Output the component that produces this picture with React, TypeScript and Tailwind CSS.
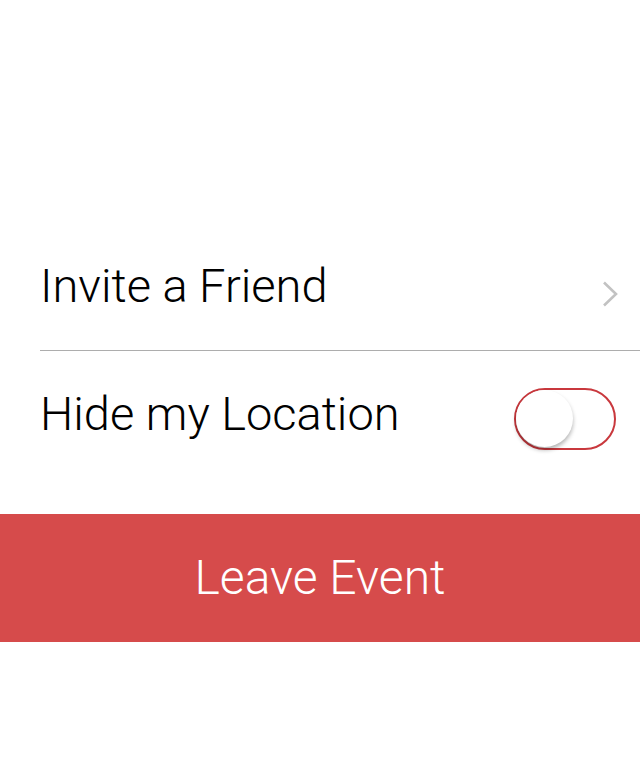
import React from "react";

function Chevron() {
  return (
    <svg width="16" height="26" viewBox="0 0 16 26" fill="none" className="block">
      <path d="M2 1.5 L14 13 L2 24.5" stroke="#c2c2c2" strokeWidth="2.6" strokeLinecap="butt" strokeLinejoin="miter" />
    </svg>
  );
}

function Toggle() {
  return (
    <div className="relative h-[62px] w-[102px] rounded-full border-2 border-[#c9383d] bg-white">
      <div className="absolute left-[0px] top-[0px] h-[57px] w-[57px] rounded-full bg-white shadow-[0_3px_4px_rgba(0,0,0,0.3)]" />
    </div>
  );
}

export default function App() {
  return (
    <div
      className="h-[771px] w-[640px] bg-white text-black font-light"
      style={{ fontFamily: 'Roboto, "Liberation Sans", Arial, sans-serif' }}
    >
      <div className="h-[220px]" />
      <div className="ml-[40px] flex h-[131px] items-center justify-between border-b border-[#adadad] pr-[22px]">
        <span className="text-[47px] leading-none">Invite a Friend</span>
        <div className="mt-[18px]">
          <Chevron />
        </div>
      </div>
      <div className="ml-[40px] flex h-[124px] items-center justify-between pr-[24px]">
        <span className="text-[47px] leading-none">Hide my Location</span>
        <div className="mt-[12px]">
          <Toggle />
        </div>
      </div>
      <div className="mt-[39px] flex h-[128px] items-center justify-center bg-[#d64b4b]">
        <span className="text-[48px] leading-none text-white">Leave Event</span>
      </div>
    </div>
  );
}
